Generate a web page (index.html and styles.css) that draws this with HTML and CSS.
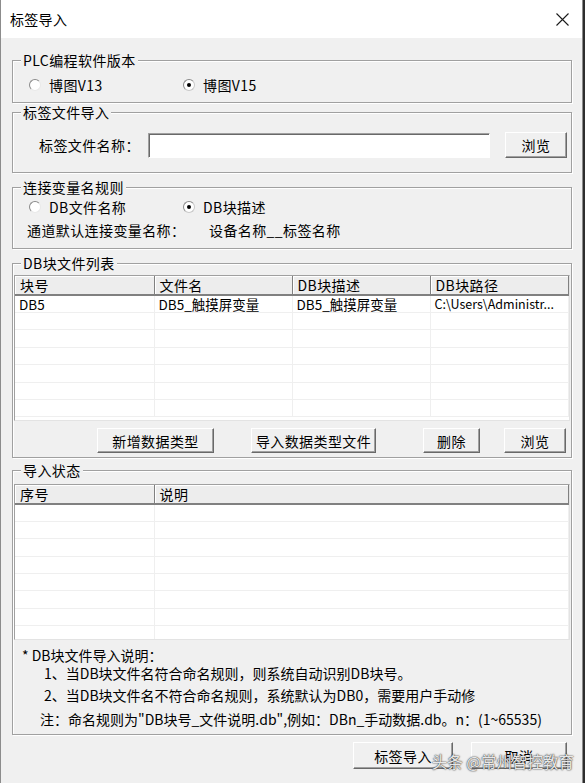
FILE: index.html
```html
<!DOCTYPE html>
<html lang="zh-CN">

<head>
    <meta charset="UTF-8">
    <meta name="viewport" content="width=device-width, initial-scale=1.0">
    <link rel="stylesheet" href="styles.css">
    <title>标签导入</title>
</head>

<body>
    <div class="window">
        <div class="titlebar">
            <span class="title">标签导入</span>
            <svg class="close" width="13" height="13" viewBox="0 0 13 13">
                <path d="M0.5 0.5 L12.5 12.5 M12.5 0.5 L0.5 12.5" stroke="#1a1a1a" stroke-width="1.1" fill="none" />
            </svg>
        </div>

        <div class="content">
            <div class="group g-version">
                <span class="legend">PLC编程软件版本</span>
                <div class="radios">
                    <label class="radio first"><span class="dot"></span>博图V13</label>
                    <label class="radio"><span class="dot checked"></span>博图V15</label>
                </div>
            </div>

            <div class="group g-file">
                <span class="legend">标签文件导入</span>
                <div class="file-row">
                    <span class="file-label">标签文件名称：</span>
                    <input class="file-input" type="text">
                    <button class="btn btn-browse">浏览</button>
                </div>
            </div>

            <div class="group g-rule">
                <span class="legend">连接变量名规则</span>
                <div class="radios tight">
                    <label class="radio first"><span class="dot"></span>DB文件名称</label>
                    <label class="radio"><span class="dot checked"></span>DB块描述</label>
                </div>
                <div class="default-line">
                    <span class="default-key">通道默认连接变量名称：</span>
                    <span>设备名称__标签名称</span>
                </div>
            </div>

            <div class="group g-list">
                <span class="legend">DB块文件列表</span>
                <div class="listview db-list">
                    <table>
                        <colgroup>
                            <col class="c1">
                            <col class="c2">
                            <col class="c3">
                            <col>
                        </colgroup>
                        <thead>
                            <tr>
                                <th>块号</th>
                                <th>文件名</th>
                                <th>DB块描述</th>
                                <th>DB块路径</th>
                            </tr>
                        </thead>
                        <tbody>
                            <tr>
                                <td>DB5</td>
                                <td>DB5_触摸屏变量</td>
                                <td>DB5_触摸屏变量</td>
                                <td class="path">C:\Users\Administr...</td>
                            </tr>
                            <tr><td></td><td></td><td></td><td></td></tr>
                            <tr><td></td><td></td><td></td><td></td></tr>
                            <tr><td></td><td></td><td></td><td></td></tr>
                            <tr><td></td><td></td><td></td><td></td></tr>
                            <tr><td></td><td></td><td></td><td></td></tr>
                            <tr><td></td><td></td><td></td><td></td></tr>
                        </tbody>
                    </table>
                </div>
                <div class="list-buttons">
                    <button class="btn btn-add">新增数据类型</button>
                    <button class="btn btn-import">导入数据类型文件</button>
                    <button class="btn btn-delete">删除</button>
                    <button class="btn btn-browse2">浏览</button>
                </div>
            </div>

            <div class="group g-status">
                <span class="legend">导入状态</span>
                <div class="listview status-list">
                    <table>
                        <colgroup>
                            <col class="c1">
                            <col>
                        </colgroup>
                        <thead>
                            <tr>
                                <th>序号</th>
                                <th>说明</th>
                            </tr>
                        </thead>
                        <tbody>
                            <tr><td></td><td></td></tr>
                            <tr><td></td><td></td></tr>
                            <tr><td></td><td></td></tr>
                            <tr><td></td><td></td></tr>
                            <tr><td></td><td></td></tr>
                            <tr><td></td><td></td></tr>
                            <tr><td></td><td></td></tr>
                            <tr><td></td><td></td></tr>
                        </tbody>
                    </table>
                </div>
                <div class="notes">
                    <div class="note note-head">* DB块文件导入说明：</div>
                    <div class="note note-1">1、当DB块文件名符合命名规则，则系统自动识别DB块号。</div>
                    <div class="note note-2">2、当DB块文件名不符合命名规则，系统默认为DB0，需要用户手动修</div>
                    <div class="note note-3">注：命名规则为"DB块号_文件说明.db",例如：DBn_手动数据.db。n：(1~65535)</div>
                </div>
            </div>

            <div class="dialog-buttons">
                <button class="btn btn-ok">标签导入</button>
                <button class="btn btn-cancel">取消</button>
            </div>
        </div>

        <div class="watermark">头条 @常州智控教育</div>
    </div>
</body>

</html>
```

FILE: styles.css
```css
:root {
    --font: "Noto Sans CJK SC", "Noto Sans", sans-serif;
    --face: #f0f0f0;
    --line: #a0a0a0;
    --dark: #696969;
    --text: #000;
}

html,
body {
    margin: 0;
    background: #2e2e2e;
}

body {
    font-family: var(--font);
    font-size: 14px;
    color: var(--text);
}

.window {
    position: relative;
    width: 581px;
    height: 783px;
    background: var(--face);
    border-left: 1px solid #8c8c8c;
    border-right: 1px solid #8c8c8c;
    overflow: hidden;
}

.titlebar {
    height: 38px;
    background: #fff;
    display: flex;
    align-items: center;
    justify-content: space-between;
    padding: 0 13px 0 9px;
}

.title {
    font-size: 14px;
    line-height: 16px;
    letter-spacing: 0.3px;
}

.content {
    padding: 22px 10px 0 11px;
    letter-spacing: 0.4px;
}

/* group boxes */
.group {
    box-sizing: border-box;
    border: 1px solid var(--line);
    box-shadow: inset 1px 1px 0 #fff, 1px 1px 0 #fff;
}

.legend {
    display: block;
    width: fit-content;
    margin: -9px 0 0 8px;
    padding: 0 2px;
    background: var(--face);
    line-height: 16px;
}

.g-version {
    height: 43px;
}

.g-file {
    height: 61px;
    margin-top: 9px;
}

.g-rule {
    height: 62px;
    margin-top: 14px;
}

.g-list {
    height: 195px;
    margin-top: 14px;
}

.g-status {
    height: 265px;
    margin-top: 12px;
}

/* radios */
.radios {
    display: flex;
    margin-top: 9px;
    padding-left: 16px;
    height: 16px;
    line-height: 16px;
}

.radios.tight {
    margin-top: 4px;
}

.radio {
    display: flex;
    align-items: center;
    gap: 8px;
}

.radio.first {
    width: 154px;
}

.dot {
    position: relative;
    box-sizing: border-box;
    width: 12px;
    height: 12px;
    border-radius: 50%;
    background: #fff;
    border: 1px solid;
    border-color: #8a8a8a #e8e8e8 #e8e8e8 #8a8a8a;
}

.dot.checked {
    border-color: #8a8a8a #c8c8c8 #c8c8c8 #8a8a8a;
}

.dot.checked::after {
    content: "";
    position: absolute;
    left: 3px;
    top: 3px;
    width: 4px;
    height: 4px;
    border-radius: 50%;
    background: #000;
}

/* file row */
.file-row {
    display: flex;
    align-items: flex-start;
    margin-top: 12px;
    padding-left: 26px;
}

.file-label {
    width: 109px;
    flex: none;
    line-height: 26px;
}

.file-input {
    box-sizing: border-box;
    width: 342px;
    height: 25px;
    margin: 1px 0 0;
    padding: 0 4px;
    background: #fff;
    border: 1px solid;
    border-color: #a0a0a0 #fff #fff #a0a0a0;
    box-shadow: inset 1px 1px 0 #696969;
    font-family: var(--font);
    outline: none;
}

/* buttons */
.btn {
    box-sizing: border-box;
    height: 25px;
    padding: 0;
    font-family: var(--font);
    font-size: 14px;
    letter-spacing: 0.4px;
    color: #000;
    background: var(--face);
    border: 1px solid;
    border-color: #fff #696969 #696969 #fff;
    box-shadow: inset -1px -1px 0 #a0a0a0;
}

.btn-browse {
    width: 62px;
    height: 26px;
    margin-left: 15px;
}

.default-line {
    display: flex;
    margin-top: 7px;
    padding-left: 14px;
    line-height: 16px;
}

.default-key {
    width: 182px;
}

/* list views */
.listview {
    box-sizing: border-box;
    margin: 4px 1px 0;
    background: #fff;
    border: 1px solid;
    border-color: #a0a0a0 #e3e3e3 #e3e3e3 #a0a0a0;
    overflow: hidden;
    letter-spacing: 0;
}

.db-list {
    height: 146px;
}

.status-list {
    height: 156px;
    margin-top: 6px;
}

.listview table {
    width: 100%;
    table-layout: fixed;
    border-collapse: collapse;
}

.listview .c1 {
    width: 139px;
}

.listview .c2,
.listview .c3 {
    width: 138px;
}

.listview th {
    box-sizing: border-box;
    height: 19px;
    padding: 0 0 0 5px;
    text-align: left;
    font-weight: normal;
    line-height: 17px;
    background: #ededed;
    border-right: 1px solid #808080;
    border-bottom: 2px solid #808080;
    box-shadow: inset 1px 1px 0 #fff;
    white-space: nowrap;
    letter-spacing: 0.4px;
}

.listview td {
    box-sizing: border-box;
    height: 17.4px;
    padding: 0 0 0 4px;
    line-height: 16px;
    font-size: 13.5px;
    border-right: 1px solid #efefef;
    border-bottom: 1px solid #efefef;
    white-space: nowrap;
    overflow: hidden;
}

.listview td.path {
    font-size: 12.5px;
}

.list-buttons {
    display: flex;
    margin-top: 7px;
}

.btn-add {
    width: 117px;
    margin-left: 84px;
}

.btn-import {
    width: 125px;
    margin-left: 37px;
}

.btn-delete {
    width: 57px;
    margin-left: 47px;
}

.btn-browse2 {
    width: 62px;
    margin-left: 24px;
}

/* notes */
.notes {
    line-height: 18px;
    letter-spacing: 0;
}

.note-head {
    margin-top: 6px;
    padding-left: 9px;
}

.note-1,
.note-2 {
    padding-left: 31px;
}

.note-2 {
    margin-top: 4px;
}

.note-3 {
    margin-top: 6px;
    padding-left: 27px;
}

.dialog-buttons {
    display: flex;
    justify-content: flex-end;
    gap: 18px;
    margin-top: 7px;
    padding-right: 5px;
}

.btn-ok {
    width: 100px;
    height: 27px;
}

.btn-cancel {
    width: 96px;
    height: 27px;
}

.watermark {
    position: absolute;
    right: 8px;
    bottom: 12px;
    font-size: 15.5px;
    line-height: 20px;
    color: rgba(255, 255, 255, 0.9);
    text-shadow: 0 0 2px #444, 0 0 1px #222;
    white-space: nowrap;
}
```
